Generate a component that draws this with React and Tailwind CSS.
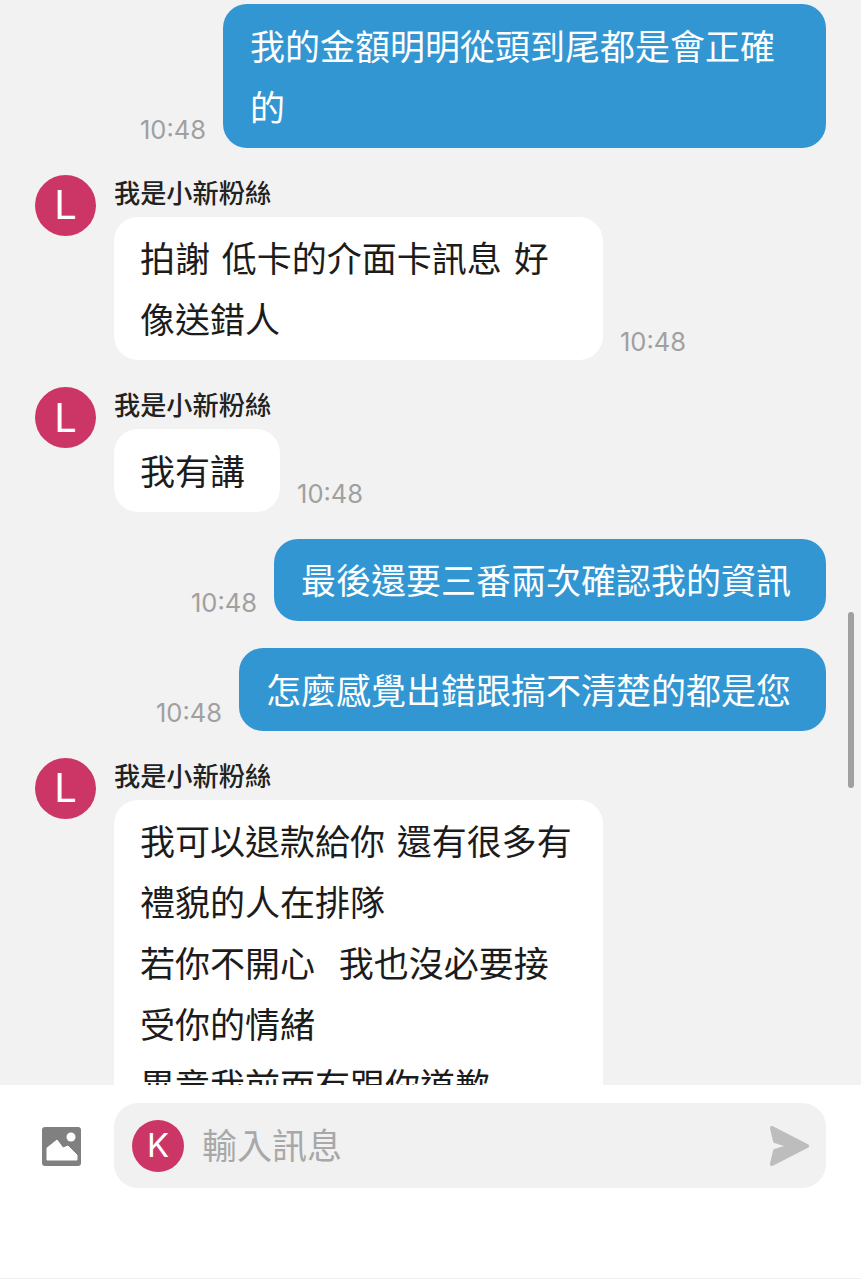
const cjk = { fontFamily: '"Noto Sans CJK TC", "Noto Sans", sans-serif' };

const Time = () => (
  <span className="mb-[2px] shrink-0 text-[25.5px] leading-[32px] text-[#a0a0a0]" style={{ fontFamily: "Inter, sans-serif" }}>
    10:48
  </span>
);

const Mine = ({ children, className = "" }) => (
  <div className="flex items-end justify-end gap-[17px] pr-[35px]">
    <Time />
    <div className={`rounded-[24px] bg-[#3296d3] pb-[11.75px] pl-[27px] pr-[35px] pt-[9.75px] text-[35px] leading-[61px] text-white ${className}`}>
      {children}
    </div>
  </div>
);

const Theirs = ({ children, noTime, className = "" }) => (
  <div className="flex gap-[18px] pl-[35px]">
    <div className="flex h-[61px] w-[61px] shrink-0 items-center justify-center rounded-full bg-[#cc3666] text-[40px] text-white" style={{ fontFamily: "Inter, sans-serif" }}>
      L
    </div>
    <div className="min-w-0">
      <div className="h-[42px] text-[26.2px] font-medium leading-[35px] text-[#222222]">我是小新粉絲</div>
      <div className="flex items-end gap-[17px]">
        <div className={`whitespace-pre-wrap rounded-[24px] bg-white pb-[11.75px] pl-[26px] pt-[9.75px] text-[35px] leading-[61px] text-[#1c1c1c] [word-spacing:4px] ${className}`}>
          {children}
        </div>
        {!noTime && <Time />}
      </div>
    </div>
  </div>
);

export default function App() {
  return (
    <div className="relative flex h-[1279px] w-[861px] flex-col overflow-hidden bg-[#f2f2f2]" style={cjk}>
      <div className="flex h-[1085px] shrink-0 flex-col gap-[27px] overflow-hidden pt-[4px]">
        <Mine className="w-[603px]">我的金額明明從頭到尾都是會正確的</Mine>
        <Theirs className="w-[489px] pr-[30px]">拍謝 低卡的介面卡訊息 好像送錯人</Theirs>
        <Theirs className="pr-[35px]">我有講</Theirs>
        <Mine>最後還要三番兩次確認我的資訊</Mine>
        <Mine>怎麼感覺出錯跟搞不清楚的都是您</Mine>
        <Theirs noTime className="w-[489px] pr-[30px]">
          {"我可以退款給你 還有很多有禮貌的人在排隊\n若你不開心  我也沒必要接受你的情緒\n畢竟我前面有跟你道歉"}
        </Theirs>
      </div>

      {/* scrollbar */}
      <div className="absolute left-[848px] top-[612px] h-[176px] w-[6px] rounded-full bg-[#a0a0a0]" />

      <div className="flex flex-1 items-start gap-[33px] border-b border-[#f0f0f0] bg-white pl-[42px] pr-[35px] pt-[18px]">
        <svg className="mt-[24px] shrink-0" width="39" height="39" viewBox="0 0 39 39">
          <rect width="39" height="39" rx="3" fill="#808080" />
          <circle cx="29" cy="10" r="4.5" fill="#ffffff" />
          <path d="M5 33V21L15 13L21 21L26 19L35 28V33Z" fill="#ffffff" stroke="#ffffff" strokeLinejoin="round" />
        </svg>
        <div className="flex h-[85px] flex-1 items-center rounded-[24px] bg-[#f1f1f1] pl-[18px] pr-[16px]">
          <div className="flex h-[52px] w-[52px] shrink-0 items-center justify-center rounded-full bg-[#cc3666] text-[33px] text-white" style={{ fontFamily: "Inter, sans-serif" }}>
            K
          </div>
          <span className="mb-[4px] ml-[18px] flex-1 text-[35px] leading-[44px] text-[#a8a8a8]">輸入訊息</span>
          <svg className="mr-[1px]" width="40" height="42" viewBox="0 0 40 42">
            <path d="M3 3L38 21L3 39L6 26L22 21L6 16Z" fill="#bdbdbd" stroke="#bdbdbd" strokeWidth="4" strokeLinejoin="round" />
          </svg>
        </div>
      </div>
    </div>
  );
}
